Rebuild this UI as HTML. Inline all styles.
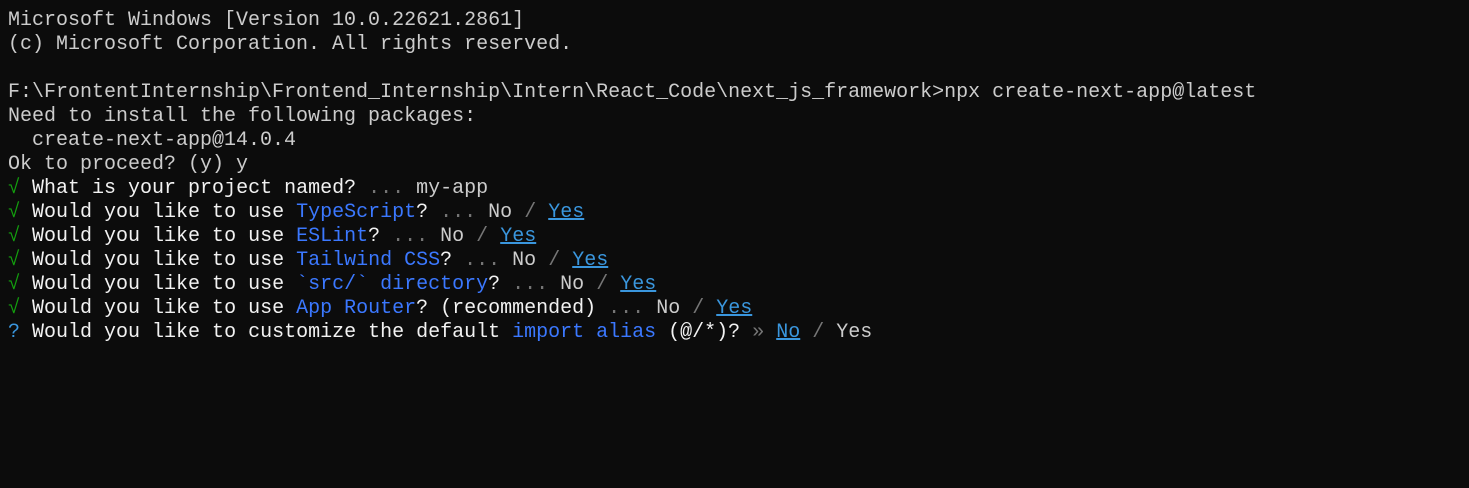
<!DOCTYPE html>
<html><head><style>
html,body{margin:0;background:#0c0c0c;width:1469px;height:488px;overflow:hidden}
pre{margin:0;position:absolute;left:8px;top:9px;font-family:"Liberation Mono",monospace;font-size:20px;line-height:24px;color:#cccccc;letter-spacing:0}
.g{color:#13a10e}.b{color:#3b78ff}.d{color:#767676}.c{color:#3a96dd}.u{color:#3a96dd;text-decoration:underline}.w{color:#f2f2f2}
</style></head><body><pre>Microsoft Windows [Version 10.0.22621.2861]
(c) Microsoft Corporation. All rights reserved.

F:\FrontentInternship\Frontend_Internship\Intern\React_Code\next_js_framework>npx create-next-app@latest
Need to install the following packages:
  create-next-app@14.0.4
Ok to proceed? (y) y
<span class="g">√</span> <span class="w">What is your project named?</span> <span class="d">...</span> my-app
<span class="g">√</span> <span class="w">Would you like to use</span> <span class="b">TypeScript</span><span class="w">?</span> <span class="d">...</span> No <span class="d">/</span> <span class="u">Yes</span>
<span class="g">√</span> <span class="w">Would you like to use</span> <span class="b">ESLint</span><span class="w">?</span> <span class="d">...</span> No <span class="d">/</span> <span class="u">Yes</span>
<span class="g">√</span> <span class="w">Would you like to use</span> <span class="b">Tailwind CSS</span><span class="w">?</span> <span class="d">...</span> No <span class="d">/</span> <span class="u">Yes</span>
<span class="g">√</span> <span class="w">Would you like to use</span> <span class="b">`src/` directory</span><span class="w">?</span> <span class="d">...</span> No <span class="d">/</span> <span class="u">Yes</span>
<span class="g">√</span> <span class="w">Would you like to use</span> <span class="b">App Router</span><span class="w">? (recommended)</span> <span class="d">...</span> No <span class="d">/</span> <span class="u">Yes</span>
<span class="c">?</span> <span class="w">Would you like to customize the default</span> <span class="b">import alias</span><span class="w"> (@/*)?</span> <span class="d">»</span> <span class="u">No</span> <span class="d">/</span> Yes</pre></body></html>
